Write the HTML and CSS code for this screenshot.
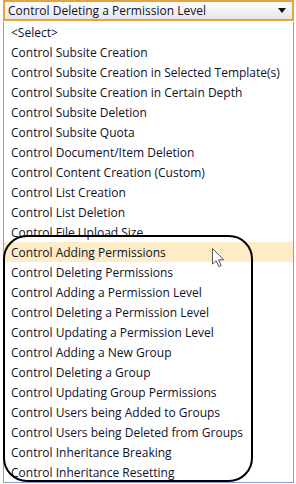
FILE: index.html
```html
<!DOCTYPE html>
<html>
<head>
<meta charset="utf-8">
<link rel="stylesheet" href="styles.css">
</head>
<body>
<div class="wrap">
  <div class="select">
    <span class="value">Control Deleting a Permission Level</span>
    <svg class="arrow" width="8" height="5" viewBox="0 0 8 5"><polygon points="0,0 8,0 4,5" fill="#111"/></svg>
  </div>
  <ul class="list">
    <li>&lt;Select&gt;</li>
    <li>Control Subsite Creation</li>
    <li>Control Subsite Creation in Selected Template(s)</li>
    <li>Control Subsite Creation in Certain Depth</li>
    <li>Control Subsite Deletion</li>
    <li>Control Subsite Quota</li>
    <li>Control Document/Item Deletion</li>
    <li>Control Content Creation (Custom)</li>
    <li>Control List Creation</li>
    <li>Control List Deletion</li>
    <li>Control File Upload Size</li>
    <li class="hover">Control Adding Permissions</li>
    <li>Control Deleting Permissions</li>
    <li>Control Adding a Permission Level</li>
    <li>Control Deleting a Permission Level</li>
    <li>Control Updating a Permission Level</li>
    <li>Control Adding a New Group</li>
    <li>Control Deleting a Group</li>
    <li>Control Updating Group Permissions</li>
    <li>Control Users being Added to Groups</li>
    <li>Control Users being Deleted from Groups</li>
    <li>Control Inheritance Breaking</li>
    <li>Control Inheritance Resetting</li>
  </ul>
  <div class="callout"></div>
  <svg class="cursor" width="13" height="20" viewBox="0 0 13 20">
    <path d="M0.5,0.5 L0.5,16 L4.2,12.6 L6.8,18.6 L9.2,17.6 L6.7,11.8 L11.6,11.8 Z" fill="#fff" stroke="#555" stroke-width="1" stroke-linejoin="round"/>
  </svg>
</div>
</body>
</html>
```
FILE: styles.css
```css
html, body {
  margin: 0;
  padding: 0;
  background: #fff;
}
body {
  font-family: "Open Sans", "Noto Sans", sans-serif;
  font-size: 12px;
  color: #10102a;
}
.wrap {
  position: relative;
  margin-left: 3px;
  width: 291px;
}
.select {
  box-sizing: border-box;
  height: 21px;
  border: 2px solid #e9a23b;
  background: linear-gradient(#ffffff, #e6e6e6);
  display: flex;
  align-items: center;
  justify-content: space-between;
  padding: 0 6px 0 3px;
  font-size: 12px;
}
.value {
  line-height: 17px;
}
.list {
  list-style: none;
  margin: 0;
  padding: 0;
  border: 1px solid #7fa4d8;
  border-top: none;
}
.list li {
  height: 20px;
  line-height: 21px;
  padding-left: 7px;
  white-space: nowrap;
}
.list li:first-child {
  margin-top: 1px;
}
.list li.hover {
  background: #fdecc5;
}
.callout {
  position: absolute;
  left: 0;
  top: 235px;
  width: 250px;
  height: 247px;
  box-sizing: border-box;
  border: 2px solid #000;
  border-radius: 24px;
}
.cursor {
  position: absolute;
  left: 209px;
  top: 248px;
}
```
